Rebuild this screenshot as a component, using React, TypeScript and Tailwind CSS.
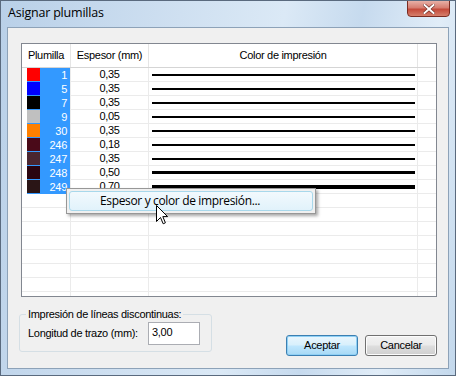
import React from "react";

const rows = [
  { n: "1", c: "#ff0000", w: "0,35", t: 2 },
  { n: "5", c: "#0000ff", w: "0,35", t: 2 },
  { n: "7", c: "#000000", w: "0,35", t: 2 },
  { n: "9", c: "#c0c0c0", w: "0,05", t: 2 },
  { n: "30", c: "#ff8000", w: "0,35", t: 2 },
  { n: "246", c: "#4a0a19", w: "0,18", t: 2 },
  { n: "247", c: "#4a2630", w: "0,35", t: 2 },
  { n: "248", c: "#2a0510", w: "0,50", t: 3 },
  { n: "249", c: "#2a1516", w: "0,70", t: 4 },
];

const tbl = { fontFamily: '"Liberation Sans", Arial, sans-serif' } as React.CSSProperties;
const ui = { fontFamily: '"Open Sans", "Noto Sans", sans-serif' } as React.CSSProperties;

export default function App() {
  return (
    <div
      className="relative w-[456px] h-[376px] overflow-hidden flex flex-col border border-[#5a6a7e]"
      style={{
        background:
          "linear-gradient(100deg, #b9d0e8 0%, #cfe0f1 35%, #dbe9f6 55%, #c6daee 70%, #e1edf8 85%, #c3d8ec 100%)",
      }}
    >
      {/* Title bar */}
      <div className="h-[26px] flex items-start justify-between pl-[7px] pr-[5px]">
        <div className="text-[12.5px] text-black mt-[3px] tracking-[-0.2px]" style={ui}>
          Asignar plumillas
        </div>
        <div
          className="w-[43px] h-[17px] -mt-[1px] rounded-b-[4px] border border-[#7a2c22] flex items-center justify-center"
          style={{ background: "linear-gradient(#e7b0a6, #d67d70 45%, #c44a3a 55%, #d67f6c)" }}
        >
          <svg width="12" height="10" viewBox="0 0 12 10">
            <path d="M1.5 1 L10.5 9 M10.5 1 L1.5 9" stroke="#6b2a22" strokeWidth="3.2" strokeLinecap="square" />
            <path d="M1.5 1 L10.5 9 M10.5 1 L1.5 9" stroke="#ffffff" strokeWidth="2" strokeLinecap="square" />
          </svg>
        </div>
      </div>

      {/* Client area */}
      <div className="mx-[6px] h-[342px] bg-[#f0f0f0] border border-[#8da2b8] flex flex-col">
        {/* Table */}
        <div className="ml-[13px] mt-[15px] w-[416px] h-[254px] bg-white border border-[#828790] flex flex-col overflow-hidden" style={tbl}>
          <div className="h-[24px] shrink-0 flex border-b border-[#d5d5d5] text-[11px] tracking-[-0.3px] text-black">
            <div className="w-[49px] border-r border-[#e5e5e5] flex items-center justify-center">Plumilla</div>
            <div className="w-[78px] border-r border-[#e5e5e5] flex items-center justify-center">Espesor (mm)</div>
            <div className="w-[269px] border-r border-[#e5e5e5] flex items-center justify-center">Color de impresión</div>
            <div className="flex-1" />
          </div>
          {rows.map((r) => (
            <div key={r.n} className="h-[14px] shrink-0 flex text-[11px] tracking-[-0.3px]">
              <div className="w-[49px] border-r border-[#ebebeb] pl-[5px] flex">
                <div className="flex-1 bg-[#3399ff] flex">
                  <div className="w-[13px] h-[13px]" style={{ background: r.c }} />
                  <div className="flex-1 text-right pr-[3px] text-white leading-[14px]">{r.n}</div>
                </div>
              </div>
              <div className="w-[78px] border-r border-b border-[#ebebeb] text-center leading-[13px] text-black">{r.w}</div>
              <div className="w-[269px] border-r border-b border-[#ebebeb] flex items-center pl-[3px] pr-[2px]">
                <div className="w-full bg-black" style={{ height: r.t }} />
              </div>
              <div className="flex-1 border-b border-[#ebebeb]" />
            </div>
          ))}
          {Array.from({ length: 8 }).map((_, i) => (
            <div key={i} className="h-[14px] shrink-0 flex">
              <div className="w-[49px] border-r border-b border-[#ebebeb]" />
              <div className="w-[78px] border-r border-b border-[#ebebeb]" />
              <div className="w-[269px] border-r border-b border-[#ebebeb]" />
              <div className="flex-1 border-b border-[#ebebeb]" />
            </div>
          ))}
        </div>

        {/* Bottom */}
        <div className="flex items-start mt-[12px] pl-[11px] pr-[11px]" style={tbl}>
          <div className="w-[193px] h-[38px] mt-[5px] border border-[#d5dfe5] rounded-[3px] relative">
            <div className="absolute -top-[8px] left-[6px] px-[2px] bg-[#f0f0f0] text-[11px] tracking-[-0.3px] leading-[14px] text-black">
              Impresión de líneas discontinuas:
            </div>
            <div className="flex items-center mt-[7px] pl-[8px]">
              <div className="text-[11px] tracking-[-0.3px] text-black w-[120px]">Longitud de trazo (mm):</div>
              <div className="w-[52px] h-[23px] bg-white border border-[#abadb3] text-[11px] tracking-[-0.3px] pl-[3px] pt-[3px] leading-[13px]">
                3,00
              </div>
            </div>
          </div>
          <div className="flex-1" />
          <div className="flex gap-[7px] mt-[26px]">
            <div
              className="w-[72px] h-[21px] rounded-[3px] border border-[#3c7fb1] flex items-center justify-center text-[11px] tracking-[-0.3px] text-black"
              style={{ background: "linear-gradient(#eaf6fd, #d9f0fc 45%, #bee6fd 55%, #a7d9f5)", boxShadow: "inset 0 0 0 1px #8fd0f5" }}
            >
              Aceptar
            </div>
            <div
              className="w-[72px] h-[21px] rounded-[3px] border border-[#707070] flex items-center justify-center text-[11px] tracking-[-0.3px] text-black"
              style={{ background: "linear-gradient(#f2f2f2, #ebebeb 45%, #dddddd 55%, #cfcfcf)", boxShadow: "inset 0 0 0 1px #fcfcfc" }}
            >
              Cancelar
            </div>
          </div>
        </div>
      </div>

      {/* Context menu */}
      <div
        className="absolute left-[65px] top-[187px] w-[250px] h-[26px] bg-[#f0f0f0] border border-[#979797] p-[2px]"
        style={{ boxShadow: "2px 2px 3px rgba(0,0,0,0.35)" }}
      >
        <div
          className="w-full h-full rounded-[3px] border border-[#a8d8eb] flex items-center pl-[30px] text-[12px] text-black tracking-[-0.35px]"
          style={{ ...ui, background: "linear-gradient(#f2f9fd, #e1f2fb)" }}
        >
          Espesor y color de impresión...
        </div>
      </div>

      {/* Cursor */}
      <svg className="absolute left-[155px] top-[204px]" width="13" height="21" viewBox="0 0 13 21">
        <path d="M0.5 0.5 L0.5 16.5 L4.5 12.5 L7.2 18.8 L9.4 17.8 L6.8 11.6 L11.6 11.6 Z" fill="#ffffff" stroke="#000000" strokeWidth="1" strokeLinejoin="miter" />
      </svg>
    </div>
  );
}
